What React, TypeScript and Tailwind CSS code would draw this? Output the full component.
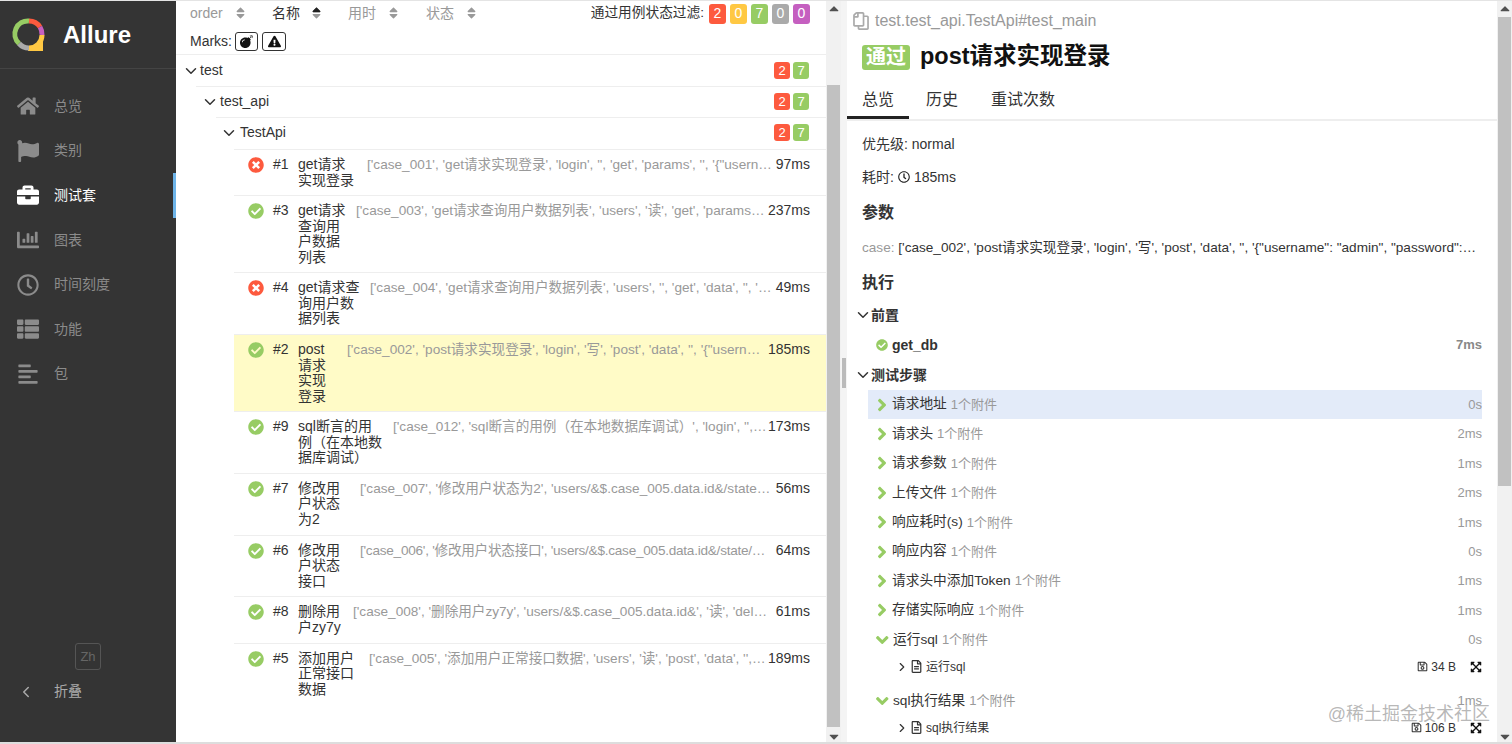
import { ChevronDown, ChevronRight, ChevronLeft } from 'lucide-react'
import {
  FaHome,
  FaFlag,
  FaBriefcase,
  FaChartBar,
  FaRegClock,
  FaThList,
  FaAlignLeft,
  FaSort,
  FaSortUp,
  FaBomb,
  FaExclamationTriangle,
  FaCheckCircle,
  FaTimesCircle,
  FaRegCopy,
  FaRegFileAlt,
  FaRegSave,
  FaExpandArrowsAlt,
  FaAngleRight,
  FaAngleDown,
  FaCaretUp,
  FaCaretDown,
} from 'react-icons/fa'

const navItems = [
  { label: '总览', icon: FaHome },
  { label: '类别', icon: FaFlag },
  { label: '测试套', icon: FaBriefcase, active: true },
  { label: '图表', icon: FaChartBar },
  { label: '时间刻度', icon: FaRegClock },
  { label: '功能', icon: FaThList },
  { label: '包', icon: FaAlignLeft },
]

// nameW keeps the wrap of the name column, which the original gets from flex shrink
const cases = [
  { id: '#1', ok: false, name: 'get请求实现登录', nameW: 'w-[58px]', gap: 'ml-[11px]', info: "['case_001', 'get请求实现登录', 'login', '', 'get', 'params', '', '{\"usern…", time: '97ms' },
  { id: '#3', ok: true, name: 'get请求查询用户数据列表', nameW: 'w-[48px]', gap: 'ml-[10px]', info: "['case_003', 'get请求查询用户数据列表', 'users', '读', 'get', 'params…", time: '237ms' },
  { id: '#4', ok: false, name: 'get请求查询用户数据列表', nameW: 'w-[62px]', gap: 'ml-[10px]', info: "['case_004', 'get请求查询用户数据列表', 'users', '', 'get', 'data', '', '…", time: '49ms' },
  { id: '#2', ok: true, name: 'post请求实现登录', nameW: 'w-[30px]', gap: 'ml-[19px]', info: "['case_002', 'post请求实现登录', 'login', '写', 'post', 'data', '', '{\"usern…", time: '185ms', selected: true },
  { id: '#9', ok: true, name: 'sql断言的用例（在本地数据库调试）', nameW: 'w-[85px]', gap: 'ml-[10px]', info: "['case_012', 'sql断言的用例（在本地数据库调试）', 'login', '',…", time: '173ms' },
  { id: '#7', ok: true, name: '修改用户状态为2', nameW: 'w-[44px]', gap: 'ml-[18px]', info: "['case_007', '修改用户状态为2', 'users/&$.case_005.data.id&/state…", time: '56ms' },
  { id: '#6', ok: true, name: '修改用户状态接口', nameW: 'w-[44px]', gap: 'ml-[18px] tracking-[-0.25px]', info: "['case_006', '修改用户状态接口', 'users/&$.case_005.data.id&/state/…", time: '64ms' },
  { id: '#8', ok: true, name: '删除用户zy7y', nameW: 'w-[44px]', gap: 'ml-[11px]', info: "['case_008', '删除用户zy7y', 'users/&$.case_005.data.id&', '读', 'del…", time: '61ms' },
  { id: '#5', ok: true, name: '添加用户正常接口数据', nameW: 'w-[58px]', gap: 'ml-[13px]', info: "['case_005', '添加用户正常接口数据', 'users', '读', 'post', 'data', '',…", time: '189ms' },
]

const steps = [
  { name: '请求地址', time: '0s', active: true },
  { name: '请求头', time: '2ms' },
  { name: '请求参数', time: '1ms' },
  { name: '上传文件', time: '2ms' },
  { name: '响应耗时(s)', time: '1ms' },
  { name: '响应内容', time: '0s' },
  { name: '请求头中添加Token', time: '1ms' },
  { name: '存储实际响应', time: '1ms' },
  { name: '运行sql', time: '0s', file: '运行sql', size: '34 B' },
  { name: 'sql执行结果', time: '1ms', file: 'sql执行结果', size: '106 B' },
]

function Logo() {
  return (
    <svg viewBox="0 0 36 36" className="w-[36px] h-[36px]" fill="none">
      <path d="M18 4 A13 13 0 0 1 29 10" stroke="#fd5a3e" strokeWidth="5" />
      <path d="M29 10 A13 13 0 0 1 31 18" stroke="#c55fc0" strokeWidth="5" />
      <path d="M31 18 V33 H18 V31 A13 13 0 0 0 31 18" fill="#ffc843" stroke="#ffc843" strokeWidth="2" />
      <path d="M18 31 A13 13 0 0 1 8 26.5" stroke="#aaaaaa" strokeWidth="5" />
      <path d="M8 26.5 A13 13 0 0 1 18 4" stroke="#97cc64" strokeWidth="5" />
      <path d="M31 18 A13 13 0 0 1 18 31" stroke="#ffc843" strokeWidth="5" />
    </svg>
  )
}

function Scrollbar({ thumb }: { thumb: string }) {
  return (
    <div className="w-[15px] shrink-0 bg-[#f1f1f1] flex flex-col items-center">
      <FaCaretUp className="h-[15px] shrink-0 text-[10px] text-[#505050]" />
      <div className={`w-full px-[1px] ${thumb}`}>
        <div className="h-full bg-[#c1c1c1]" />
      </div>
      <div className="flex-1" />
      <FaCaretDown className="h-[15px] shrink-0 text-[10px] text-[#505050]" />
    </div>
  )
}

function SortHead({ label, width, active }: { label: string; width: string; active?: boolean }) {
  return (
    <div className={`flex items-center ${width} ${active ? 'text-[#333]' : 'text-[#999]'}`}>
      <span>{label}</span>
      {active ? (
        <span className="relative ml-[12px] w-[9px] h-[14px] text-[#999]">
          <FaSort className="absolute inset-0 w-[9px] h-[14px]" />
          <FaSortUp className="absolute inset-0 w-[9px] h-[14px] text-[#222]" />
        </span>
      ) : (
        <FaSort className="ml-[13px] w-[9px] h-[14px] text-[#999]" />
      )}
    </div>
  )
}

function Count({ value, color, large }: { value: number; color: string; large?: boolean }) {
  return (
    <span className={`flex items-center justify-center rounded-[3px] text-white ${color} ${large ? 'w-[17px] h-[20px] text-[14px]' : 'w-[16px] h-[17px] text-[13px]'}`}>
      {value}
    </span>
  )
}

function TreeGroup({ label, className, labelClass }: { label: string; className: string; labelClass: string }) {
  return (
    <div className={`flex items-center justify-between border-b border-[#eee] pr-[17px] ${className}`}>
      <div className={`flex items-center text-[14px] text-[#333] ${labelClass}`}>
        <ChevronDown className="w-[18px] h-[18px] text-[#333]" strokeWidth={2} />
        <span>{label}</span>
      </div>
      <div className="flex gap-[3px]">
        <Count value={2} color="bg-[#fd5a3e]" />
        <Count value={7} color="bg-[#97cc64]" />
      </div>
    </div>
  )
}

export default function App() {
  return (
    <div
      className="relative flex h-screen w-full overflow-hidden bg-white text-[14px] text-[#333] border-t border-[#e4e4e4]"
      style={{ fontFamily: '"Liberation Sans", "Noto Sans CJK SC", sans-serif' }}
    >
      {/* Sidebar */}
      <aside className="w-[176px] shrink-0 bg-[#343434] flex flex-col">
        <div className="h-[68px] shrink-0 flex items-center border-b border-[#444] pl-[11px] pt-[1px]">
          <Logo />
          <span className="ml-[16px] text-[24px] font-bold text-white">Allure</span>
        </div>
        <nav className="pt-[15px]">
          {navItems.map((item) => {
            const Icon = item.icon
            return (
              <div
                key={item.label}
                className={`flex items-center h-[44.6px] pl-[17px] ${
                  item.active ? 'text-white border-r-[3px] border-[#6eb4e8]' : 'text-[#8b8b8b]'
                }`}
              >
                <span className="w-[37px] shrink-0">
                  <Icon className="w-[22px] h-[22px]" />
                </span>
                <span className="text-[14px]">{item.label}</span>
              </div>
            )
          })}
        </nav>
        <div className="mt-auto pb-[42px]">
          <div className="ml-[75px] w-[26px] h-[27px] border border-[#555] rounded-[3px] flex items-center justify-center text-[13px] text-[#666]">
            Zh
          </div>
          <div className="flex items-center mt-[11px] pl-[17px] text-[#aaa]">
            <ChevronLeft className="w-[18px] h-[18px] mr-[19px]" strokeWidth={2} />
            <span className="text-[14px]">折叠</span>
          </div>
        </div>
      </aside>

      {/* Test tree */}
      <section className="w-[650px] shrink-0 flex flex-col overflow-hidden">
        <div className="h-[54px] shrink-0 border-b border-[#eee] px-[14px] pt-[4px]">
          <div className="flex items-center h-[16px]">
            <SortHead label="order" width="w-[82px]" />
            <SortHead label="名称" width="w-[76px]" active />
            <SortHead label="用时" width="w-[78px]" />
            <SortHead label="状态" width="w-[80px]" />
            <div className="ml-auto flex items-center gap-[4px] pr-[2px] pt-[1px]">
              <span className="text-[13.7px] mr-[1px]">通过用例状态过滤:</span>
              <Count value={2} color="bg-[#fd5a3e]" large />
              <Count value={0} color="bg-[#ffc843]" large />
              <Count value={7} color="bg-[#97cc64]" large />
              <Count value={0} color="bg-[#aaaaaa]" large />
              <Count value={0} color="bg-[#c55fc0]" large />
            </div>
          </div>
          <div className="flex items-center mt-[10px] text-[14px]">
            <span>Marks:</span>
            <span className="ml-[3px] w-[23px] h-[19px] border border-[#333] rounded-[3px] flex items-center justify-center">
              <FaBomb className="w-[13px] h-[13px] text-[#111]" />
            </span>
            <span className="ml-[4px] w-[24px] h-[19px] border border-[#333] rounded-[3px] flex items-center justify-center">
              <FaExclamationTriangle className="w-[13px] h-[13px] text-[#111]" />
            </span>
          </div>
        </div>

        <TreeGroup label="test" className="h-[32px] shrink-0 ml-[20px]" labelClass="-ml-[14px]" />
        <TreeGroup label="test_api" className="h-[31px] shrink-0 ml-[40px] pb-[1px]" labelClass="-ml-[15px] gap-[1px]" />
        <TreeGroup label="TestApi" className="h-[32px] shrink-0 ml-[58px] pb-[2px]" labelClass="-ml-[14px] gap-[2px]" />

        <div className="ml-[58px]">
          {cases.map((c) => (
            <div
              key={c.id}
              className={`flex items-start pt-[7px] pb-[7.2px] pl-[14px] pr-[16px] border-b border-[#eee] last:border-b-0 leading-[15.5px] ${
                c.selected ? 'bg-[#fffbc7]' : ''
              }`}
            >
              {c.ok ? (
                <FaCheckCircle className="w-[16px] h-[16px] shrink-0 text-[#97cc64]" />
              ) : (
                <FaTimesCircle className="w-[16px] h-[16px] shrink-0 text-[#fd5a3e]" />
              )}
              <span className="ml-[9px] w-[25px] shrink-0 text-[#333]">{c.id}</span>
              <span className={`shrink-0 break-all ${c.nameW}`}>{c.name}</span>
              <span className={`flex-1 min-w-0 truncate text-[#999] text-[13.6px] ${c.gap}`}>{c.info}</span>
              <span className="shrink-0 text-right text-[#333]">{c.time}</span>
            </div>
          ))}
        </div>
      </section>

      <Scrollbar thumb="h-[642px] mt-[69px]" />

      {/* Splitter */}
      <div className="w-[6px] shrink-0 bg-[#f4f4f4] flex items-center justify-center">
        <div className="w-[4px] h-[30px] [background-image:radial-gradient(#bbb_1px,transparent_1px)] [background-size:2px_3px]" />
      </div>

      {/* Test result */}
      <section className="w-[650px] shrink-0 flex flex-col overflow-hidden">
        <div className="flex items-center shrink-0 h-[39px] pl-[5px] text-[16px] text-[#999]">
          <FaRegCopy className="w-[18px] h-[18px] mr-[5px] scale-x-[-1] text-[#aaa]" />
          <span>test.test_api.TestApi#test_main</span>
        </div>
        <div className="flex items-center shrink-0 pl-[15px] h-[34px]">
          <span className="w-[48px] h-[25px] rounded-[3px] bg-[#97cc64] text-white font-bold text-[20px] flex items-center justify-center">
            通过
          </span>
          <span className="ml-[10px] text-[23.5px] font-bold text-[#111]">post请求实现登录</span>
        </div>
        <div className="flex shrink-0 h-[47px] border-b-2 border-[#eee] text-[16px]">
          <div className="px-[15px] h-[45px] pt-[10px] border-b-[3px] border-[#222] flex items-center">总览</div>
          <div className="px-[15px] ml-[2px] h-[45px] pt-[10px] border-b-[3px] border-transparent flex items-center">历史</div>
          <div className="px-[15px] ml-[3px] h-[45px] pt-[10px] border-b-[3px] border-transparent flex items-center">重试次数</div>
        </div>

        <div className="shrink-0 pl-[15px] pr-[15px] pt-[15px]">
          <div className="h-[16px] leading-[16px]">优先级: normal</div>
          <div className="mt-[17px] h-[16px] leading-[16px] flex items-center">
            耗时:
            <FaRegClock className="w-[12px] h-[12px] mx-[4px] text-[#222]" />
            185ms
          </div>
          <div className="mt-[19px] h-[18px] leading-[18px] text-[16px] font-bold">参数</div>
          <div className="mt-[18px] h-[16px] leading-[16px] truncate text-[13.6px]">
            <span className="text-[#999]">case:</span>{' '}
            {"['case_002', 'post请求实现登录', 'login', '写', 'post', 'data', '', '{\"username\": \"admin\", \"password\":…"}
          </div>
          <div className="mt-[18px] h-[18px] leading-[18px] text-[16px] font-bold">执行</div>

          <div className="mt-[15px] h-[16px] flex items-center font-bold">
            <ChevronDown className="w-[18px] h-[18px] -ml-[8px] -mr-[1px]" strokeWidth={2} />
            前置
          </div>
          <div className="mt-[14px] h-[16px] flex items-center font-bold ml-[14px]">
            <FaCheckCircle className="w-[12px] h-[12px] text-[#97cc64] mr-[4px]" />
            <span>get_db</span>
            <span className="ml-auto text-[13px] text-[#888]">7ms</span>
          </div>
          <div className="mt-[14px] h-[16px] flex items-center font-bold">
            <ChevronDown className="w-[18px] h-[18px] -ml-[8px] -mr-[1px]" strokeWidth={2} />
            测试步骤
          </div>

          <div className="mt-[7px] ml-[6px]">
            {steps.map((s) => (
              <div key={s.name}>
                <div className={`flex items-center h-[29.4px] pl-[9px] ${s.active ? 'bg-[#e3ebf9]' : ''}`}>
                  {s.file ? (
                    <FaAngleDown className="w-[12.5px] h-[20px] text-[#97cc64] mr-[4.5px] -ml-[1px]" />
                  ) : (
                    <FaAngleRight className="w-[10px] h-[20px] text-[#97cc64] mr-[5px]" />
                  )}
                  <span className="text-[#333] text-[13.7px]">{s.name}</span>
                  <span className="ml-[4px] text-[13px] text-[#999]">1个附件</span>
                  <span className="ml-auto text-[13px] text-[#999]">{s.time}</span>
                </div>
                {s.file && (
                  <div className="flex items-center h-[24px] mb-[8px] pl-[27px] text-[12px]">
                    <ChevronRight className="w-[14px] h-[14px] mr-[2px]" strokeWidth={2} />
                    <FaRegFileAlt className="w-[11px] h-[13px] mr-[4px]" />
                    <span>{s.file}</span>
                    <span className="ml-auto flex items-center">
                      <FaRegSave className="w-[11px] h-[11px] mr-[3px]" />
                      {s.size}
                    </span>
                    <FaExpandArrowsAlt className="ml-[14px] w-[12px] h-[12px] text-[#111]" />
                  </div>
                )}
              </div>
            ))}
          </div>
        </div>
      </section>

      <Scrollbar thumb="h-[469px] mt-[1px]" />

      <span className="absolute right-[22px] bottom-[16px] text-[18px] text-[#999]/70">@稀土掘金技术社区</span>
      <div className="absolute left-0 right-0 bottom-0 h-[2px] bg-[#ddd]" />
    </div>
  )
}
